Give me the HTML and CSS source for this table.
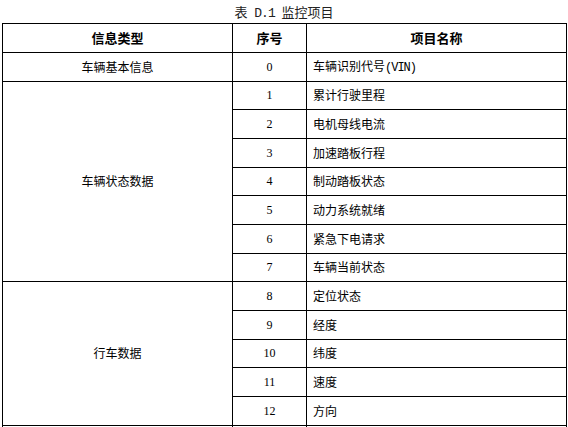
FILE: index.html
```html
<!DOCTYPE html>
<html lang="zh-CN">
<head>
<meta charset="utf-8">
<title>表 D.1 监控项目</title>
<link rel="stylesheet" href="styles.css">
</head>
<body>
<div class="page">
  <div class="caption">表<span class="latin"> D.1 </span>监控项目</div>
  <table class="grid">
    <colgroup>
      <col class="c-type">
      <col class="c-no">
      <col class="c-name">
    </colgroup>
    <thead>
      <tr class="head">
        <th>信息类型</th>
        <th>序号</th>
        <th>项目名称</th>
      </tr>
    </thead>
    <tbody>
      <tr><td class="type">车辆基本信息</td><td class="no">0</td><td class="name">车辆识别代号<span class="latin">(VIN)</span></td></tr>
      <tr><td class="type" rowspan="7">车辆状态数据</td><td class="no">1</td><td class="name">累计行驶里程</td></tr>
      <tr><td class="no">2</td><td class="name">电机母线电流</td></tr>
      <tr><td class="no">3</td><td class="name">加速踏板行程</td></tr>
      <tr><td class="no">4</td><td class="name">制动踏板状态</td></tr>
      <tr><td class="no">5</td><td class="name">动力系统就绪</td></tr>
      <tr><td class="no">6</td><td class="name">紧急下电请求</td></tr>
      <tr><td class="no">7</td><td class="name">车辆当前状态</td></tr>
      <tr><td class="type" rowspan="5">行车数据</td><td class="no">8</td><td class="name">定位状态</td></tr>
      <tr><td class="no">9</td><td class="name">经度</td></tr>
      <tr><td class="no">10</td><td class="name">纬度</td></tr>
      <tr><td class="no">11</td><td class="name">速度</td></tr>
      <tr><td class="no">12</td><td class="name">方向</td></tr>
      <tr><td class="type">&nbsp;</td><td class="no">&nbsp;</td><td class="name">&nbsp;</td></tr>
    </tbody>
  </table>
</div>
</body>
</html>
```

FILE: styles.css
```css
html, body {
  margin: 0;
  padding: 0;
  background: #ffffff;
}

body {
  font-family: "Noto Sans CJK SC", "Noto Sans", sans-serif;
  color: #000000;
}

.page {
  width: 568px;
  height: 427px;
  overflow: hidden;
  padding-left: 2px;
  box-sizing: border-box;
}

.caption {
  height: 23px;
  line-height: 23px;
  font-size: 13px;
  text-align: center;
  color: #222222;
  padding-right: 2px;
  white-space: pre;
}

.latin {
  font-family: "Liberation Mono", "DejaVu Sans Mono", monospace;
  letter-spacing: -1px;
}

.grid {
  border-collapse: collapse;
  table-layout: fixed;
  width: 564px;
}

.c-type { width: 230px; }
.c-no { width: 74px; }
.c-name { width: 260px; }

.grid th,
.grid td {
  border: 1px solid #000000;
  padding: 0;
  vertical-align: middle;
  font-size: 12px;
  line-height: 14px;
}

.grid tr {
  height: 28.66px;
}

.grid .head {
  height: 29px;
}

.grid th {
  font-size: 13px;
  font-weight: bold;
  text-align: center;
  color: #000000;
}

.type {
  text-align: center;
}

.no {
  text-align: center;
  font-family: "Liberation Serif", "Noto Sans CJK SC", serif;
  font-size: 13px;
}

.name {
  text-align: left;
  padding-left: 6px !important;
}
```
